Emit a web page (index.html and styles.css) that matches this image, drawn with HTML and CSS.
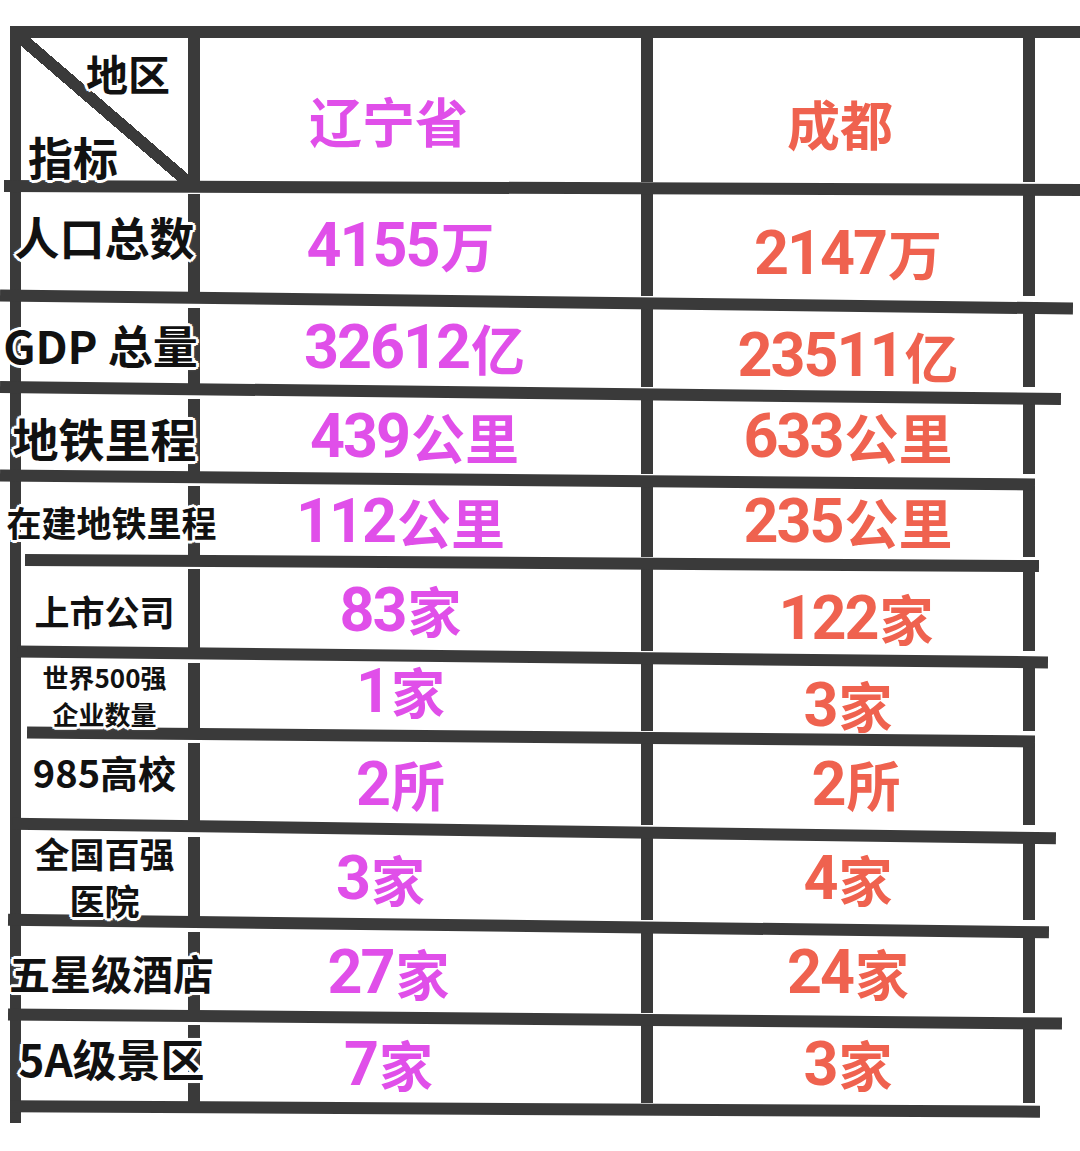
FILE: index.html
```html
<!DOCTYPE html>
<html lang="zh-CN">
<head>
<meta charset="utf-8">
<title>辽宁省 vs 成都</title>
<link rel="stylesheet" href="styles.css">
</head>
<body>
<div class="sheet">
  <div class="hline l1"></div>
  <div class="row r0">
    <div class="cell label corner">
      <span class="c-top ol">地区</span>
      <span class="c-bot ol">指标</span>
    </div>
    <div class="cell v2 head-l">辽宁省</div>
    <div class="cell v3 head-c">成都</div>
  </div>
  <div class="hline l2"></div>
  <div class="row r1">
    <div class="cell label"><span class="t ol f45 up9">人口总数</span></div>
    <div class="cell v2"><span class="n">4155</span>万</div>
    <div class="cell v3 dn8"><span class="n">2147</span>万</div>
  </div>
  <div class="hline l3"></div>
  <div class="row r2">
    <div class="cell label"><span class="t ol f45 gdp up3">GDP 总量</span></div>
    <div class="cell v2 sh-r"><span class="n">32612</span>亿</div>
    <div class="cell v3 dn8"><span class="n">23511</span>亿</div>
  </div>
  <div class="hline l4"></div>
  <div class="row r3">
    <div class="cell label"><span class="t ol f46">地铁里程</span></div>
    <div class="cell v2 sh-r"><span class="n">439</span>公里</div>
    <div class="cell v3"><span class="n">633</span>公里</div>
  </div>
  <div class="hline l5"></div>
  <div class="row r4">
    <div class="cell label"><span class="t ol f35 wide">在建地铁里程</span></div>
    <div class="cell v2"><span class="n">112</span>公里</div>
    <div class="cell v3"><span class="n">235</span>公里</div>
  </div>
  <div class="hline l6"></div>
  <div class="row r5">
    <div class="cell label"><span class="t ol f35">上市公司</span></div>
    <div class="cell v2"><span class="n">83</span>家</div>
    <div class="cell v3 sh-c dn8"><span class="n">122</span>家</div>
  </div>
  <div class="hline l7"></div>
  <div class="row r6">
    <div class="cell label"><span class="t ol f26 two26">世界500强<br>企业数量</span></div>
    <div class="cell v2 up6"><span class="n">1</span>家</div>
    <div class="cell v3 dn8"><span class="n">3</span>家</div>
  </div>
  <div class="hline l8"></div>
  <div class="row r7">
    <div class="cell label"><span class="t ol f38 up12">985高校</span></div>
    <div class="cell v2"><span class="n">2</span>所</div>
    <div class="cell v3 sh-c"><span class="n">2</span>所</div>
  </div>
  <div class="hline l9"></div>
  <div class="row r8">
    <div class="cell label"><span class="t ol f35 two35">全国百强<br>医院</span></div>
    <div class="cell v2 sh-l"><span class="n">3</span>家</div>
    <div class="cell v3"><span class="n">4</span>家</div>
  </div>
  <div class="hline l10"></div>
  <div class="row r9">
    <div class="cell label"><span class="t ol f41 wide">五星级酒店</span></div>
    <div class="cell v2 sh-l2"><span class="n">27</span>家</div>
    <div class="cell v3"><span class="n">24</span>家</div>
  </div>
  <div class="hline l11"></div>
  <div class="row r10">
    <div class="cell label"><span class="t ol f44 wide up6">5A级景区</span></div>
    <div class="cell v2 sh-l2"><span class="n">7</span>家</div>
    <div class="cell v3"><span class="n">3</span>家</div>
  </div>
  <div class="hline l12"></div>
</div>
</body>
</html>
```

FILE: styles.css
```css
* { box-sizing: border-box; }

html, body {
  margin: 0;
  padding: 0;
  background: #ffffff;
}

body {
  width: 1080px;
  height: 1151px;
  overflow: hidden;
  font-family: "Noto Sans CJK SC", "Noto Sans", sans-serif;
  font-weight: 700;
  color: #111111;
}

.sheet {
  margin: 26px 0 0 10px;
  width: 1025px;
  border-left: 11px solid #3a3a3a;
  padding-bottom: 8px;
}

/* horizontal rules, each hand-drawn with its own reach */
.hline {
  height: 12px;
  background: #3a3a3a;
  position: relative;
  z-index: 1;
  transform-origin: 50% 50%;
}
.l1  { margin-left: -11px; width: 1070px; }
.l2  { margin-left: -17px; width: 1076px; transform: rotate(0.22deg); }
.l3  { margin-left: -21px; width: 1073px; transform: rotate(0.7deg); }
.l4  { margin-left: -21px; width: 1061px; transform: rotate(0.65deg); }
.l5  { margin-left: -21px; width: 1035px; transform: rotate(0.5deg); }
.l6  { margin-left: 4px;   width: 1014px; transform: rotate(0.35deg); }
.l7  { margin-left: -4px;  width: 1031px; transform: rotate(0.6deg); }
.l8  { margin-left: 6px;   width: 1008px; transform: rotate(0.5deg); }
.l9  { margin-left: -9px;  width: 1044px; transform: rotate(0.8deg); }
.l10 { margin-left: -13px; width: 1041px; transform: rotate(0.7deg); }
.l11 { margin-left: -13px; width: 1054px; transform: rotate(0.5deg); }
.l12 { margin-left: -11px; width: 1030px; transform: rotate(0.3deg); }

.row {
  display: grid;
  grid-template-columns: 179px 453px 382px;
  grid-template-rows: minmax(0, 1fr);
}
.r0  { height: 144px; }
.r1  { height: 102px; }
.r2  { height: 79px; }
.r3  { height: 75px; }
.r4  { height: 71px; }
.r5  { height: 82px; }
.r6  { height: 68px; }
.r7  { height: 82px; }
.r8  { height: 83px; }
.r9  { height: 81px; }
.r10 { height: 78px; }

.cell {
  display: flex;
  align-items: center;
  justify-content: center;
  border-right: 12px solid #3a3a3a;
  white-space: nowrap;
  line-height: 1;
  min-width: 0;
  min-height: 0;
}

.label {
  color: #111111;
  position: relative;
  z-index: 2;
}

.t { display: block; text-align: center; }
.f45 { font-size: 45px; }
.f46 { font-size: 46px; }
.f35 { font-size: 35px; }
.f26 { font-size: 26px; }
.f38 { font-size: 38px; }
.f41 { font-size: 41px; }
.f44 { font-size: 44px; }
.wide { margin-left: 14px; }
.gdp { margin-right: 8px; }
.two26 { line-height: 37px; margin-bottom: 5px; }
.two35 { line-height: 47px; margin-bottom: 6px; }

/* nudges inside flex-centred cells */
.up3  { margin-bottom: 6px; }
.up6  { padding-bottom: 12px; }
.up9  { margin-bottom: 18px; }
.up12 { margin-bottom: 24px; }
.t.up6 { padding-bottom: 0; margin-bottom: 12px; }
.dn8  { padding-top: 16px; }

.ol {
  text-shadow:
    3px 0 0 #fff, -3px 0 0 #fff, 0 3px 0 #fff, 0 -3px 0 #fff,
    2px 2px 0 #fff, -2px -2px 0 #fff, 2px -2px 0 #fff, -2px 2px 0 #fff,
    0 0 4px #fff;
}

/* header corner with diagonal */
.corner {
  flex-direction: column;
  align-items: stretch;
  justify-content: space-between;
  padding: 14px 0 3px;
  background: linear-gradient(to top right,
    transparent calc(50% - 6px), #3a3a3a calc(50% - 6px),
    #3a3a3a calc(50% + 6px), transparent calc(50% + 6px));
}
.c-top { align-self: flex-end; font-size: 42px; margin-right: 18px; }
.c-bot { align-self: flex-start; font-size: 45px; margin-left: 7px; }

/* value columns */
.v2 {
  color: #e04fe9;
  font-size: 54px;
  padding-right: 40px;
}
.v3 {
  color: #ef624f;
  font-size: 54px;
  padding-left: 20px;
}
.n {
  font-family: Roboto, "Noto Sans", sans-serif;
  font-weight: 700;
  font-size: 61px;
  letter-spacing: -2px;
  margin-right: 2px;
}

.head-l { font-size: 53px; padding-right: 64px; padding-top: 20px; }
.head-c { font-size: 53px; padding-left: 4px; padding-top: 26px; }

.sh-r  { padding-right: 12px; }
.sh-l  { padding-right: 80px; }
.sh-l2 { padding-right: 64px; }
.sh-c  { padding-left: 36px; }
```
